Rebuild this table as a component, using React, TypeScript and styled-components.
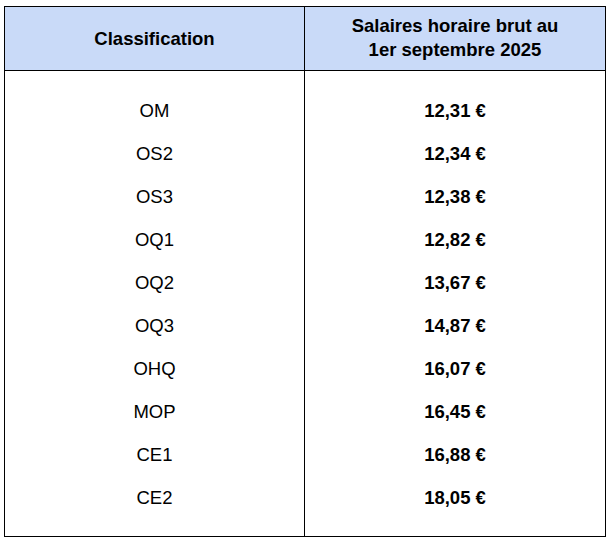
import styled, { createGlobalStyle } from 'styled-components';

interface Rate {
  classification: string;
  wage: string;
}

const rates: Rate[] = [
  { classification: 'OM', wage: '12,31 €' },
  { classification: 'OS2', wage: '12,34 €' },
  { classification: 'OS3', wage: '12,38 €' },
  { classification: 'OQ1', wage: '12,82 €' },
  { classification: 'OQ2', wage: '13,67 €' },
  { classification: 'OQ3', wage: '14,87 €' },
  { classification: 'OHQ', wage: '16,07 €' },
  { classification: 'MOP', wage: '16,45 €' },
  { classification: 'CE1', wage: '16,88 €' },
  { classification: 'CE2', wage: '18,05 €' },
];

const GlobalStyle = createGlobalStyle`
  body {
    margin: 0;
    background: #ffffff;
    font-family: "Liberation Sans", Arial, sans-serif;
    color: #000000;
  }
`;

const STable = styled.div`
  margin: 6px 0 0 4px;
  width: 602px;
  box-sizing: border-box;
  border: 1px solid #000;
  display: grid;
  grid-template-columns: 300px 300px;
  grid-template-rows: 64px 465px;
`;

const SHeadCell = styled.div<{ $divider?: boolean }>`
  background: #c9daf8;
  border-bottom: 1px solid #000;
  border-right: ${({ $divider }) => ($divider ? '1px solid #000' : 'none')};
  padding-bottom: ${({ $divider }) => ($divider ? '0' : '2px')};
  display: flex;
  flex-direction: column;
  align-items: center;
  justify-content: center;
  font-size: 18.5px;
  font-weight: bold;
  line-height: 24px;
  text-align: center;
`;

const SBodyCell = styled.div<{ $divider?: boolean }>`
  border-right: ${({ $divider }) => ($divider ? '1px solid #000' : 'none')};
  padding: 18px 0 17px;
  display: flex;
  flex-direction: column;
`;

const SValue = styled.div<{ $bold?: boolean }>`
  height: 43px;
  display: flex;
  align-items: center;
  justify-content: center;
  font-size: 18.5px;
  font-weight: ${({ $bold }) => ($bold ? 'bold' : 'normal')};
`;

const App: React.FC = () => {
  return (
    <>
      <GlobalStyle />
      <STable>
        <SHeadCell $divider>Classification</SHeadCell>
        <SHeadCell>
          <span>Salaires horaire brut au</span>
          <span>1er septembre 2025</span>
        </SHeadCell>

        <SBodyCell $divider>
          {rates.map((r) => (
            <SValue key={r.classification}>{r.classification}</SValue>
          ))}
        </SBodyCell>
        <SBodyCell>
          {rates.map((r) => (
            <SValue key={r.classification} $bold>{r.wage}</SValue>
          ))}
        </SBodyCell>
      </STable>
    </>
  );
};

export default App;
